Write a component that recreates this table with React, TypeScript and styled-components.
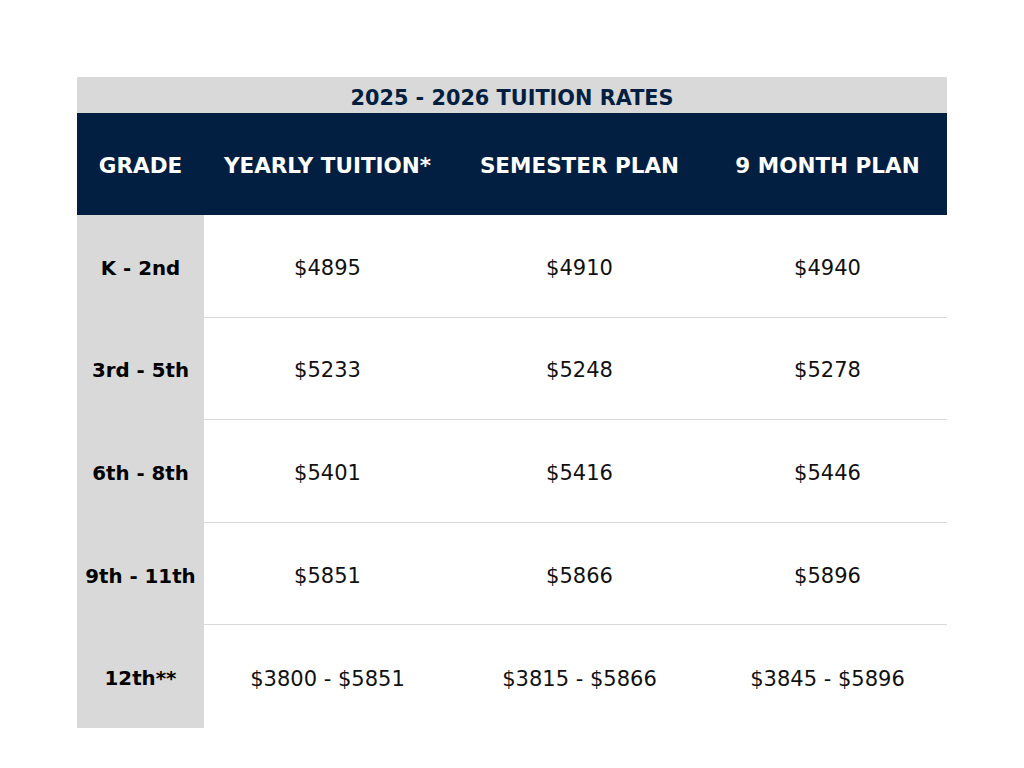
import React from "react";
import styled, { createGlobalStyle } from "styled-components";

const Global = createGlobalStyle`
  html, body { margin: 0; padding: 0; background: #ffffff; }
  body { font-family: "DejaVu Sans", "Liberation Sans", sans-serif; }
`;

const Page = styled.div`
  width: 1024px;
  height: 768px;
  padding: 77px 0 0 77px;
  box-sizing: border-box;
`;

const Table = styled.div`
  width: 870px;
  display: grid;
  grid-template-columns: 127px 247px 257px 239px;
`;

const Title = styled.div`
  grid-column: 1 / -1;
  height: 36px;
  background: #d9d9d9;
  color: #021f41;
  display: flex;
  align-items: center;
  justify-content: center;
  font-weight: 700;
  font-size: 20.8px;
  padding-top: 5px;
  box-sizing: border-box;
`;

const HeadCell = styled.div`
  height: 102px;
  background: #021f41;
  color: #ffffff;
  display: flex;
  align-items: center;
  justify-content: center;
  font-weight: 700;
  font-size: 21.5px;
  padding-top: 2px;
  box-sizing: border-box;
  white-space: nowrap;
`;

const GradeCell = styled.div`
  height: 102.6px;
  background: #d9d9d9;
  display: flex;
  align-items: center;
  justify-content: center;
  font-weight: 700;
  font-size: 19.8px;
  padding-top: 4px;
  box-sizing: border-box;
  color: #000000;
`;

const ValueCell = styled.div<{ $last: boolean }>`
  height: 102.6px;
  box-sizing: border-box;
  padding-top: 4px;
  border-bottom: ${(p) => (p.$last ? "none" : "1px solid #d9d9d9")};
  display: flex;
  align-items: center;
  justify-content: center;
  font-size: 21px;
  color: #111111;
  white-space: nowrap;
`;

const headers = ["GRADE", "YEARLY TUITION*", "SEMESTER PLAN", "9 MONTH PLAN"];

const rows: [string, string, string, string][] = [
  ["K - 2nd", "$4895", "$4910", "$4940"],
  ["3rd - 5th", "$5233", "$5248", "$5278"],
  ["6th - 8th", "$5401", "$5416", "$5446"],
  ["9th - 11th", "$5851", "$5866", "$5896"],
  ["12th**", "$3800 - $5851", "$3815 - $5866", "$3845 - $5896"],
];

export default function App() {
  return (
    <>
      <Global />
      <Page>
        <Table>
          <Title>2025 - 2026 TUITION RATES</Title>
          {headers.map((h) => (
            <HeadCell key={h}>{h}</HeadCell>
          ))}
          {rows.map((r, i) => (
            <React.Fragment key={r[0]}>
              <GradeCell>{r[0]}</GradeCell>
              {r.slice(1).map((v, j) => (
                <ValueCell key={j} $last={i === rows.length - 1}>
                  {v}
                </ValueCell>
              ))}
            </React.Fragment>
          ))}
        </Table>
      </Page>
    </>
  );
}
